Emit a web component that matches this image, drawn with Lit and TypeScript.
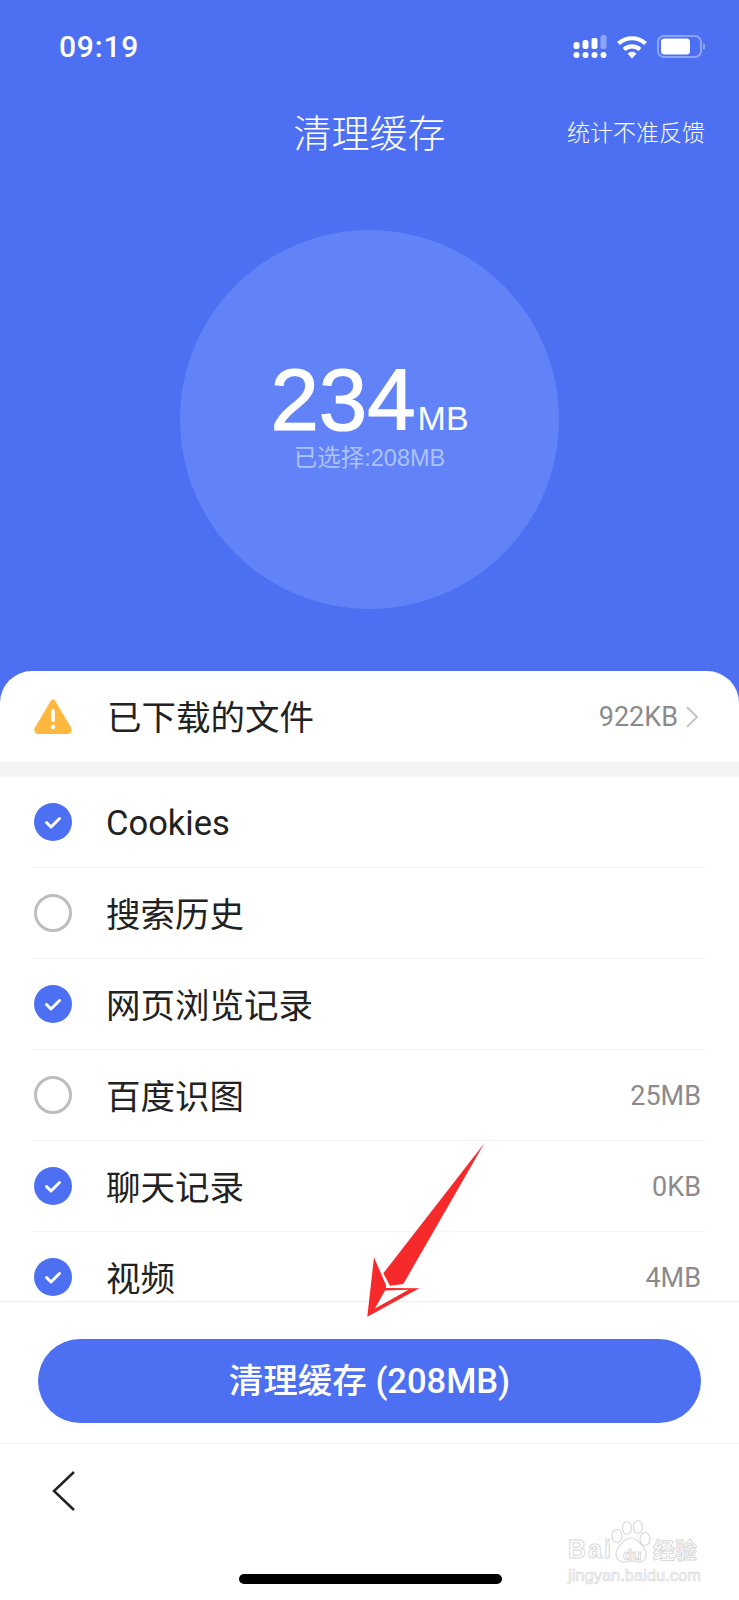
import { LitElement, html, css, svg } from 'lit';
import { customElement } from 'lit/decorators.js';

const ROWS = [
  { name: 'Cookies', size: '', on: true, latin: true },
  { name: '搜索历史', size: '', on: false },
  { name: '网页浏览记录', size: '', on: true },
  { name: '百度识图', size: '25MB', on: false },
  { name: '聊天记录', size: '0KB', on: true },
  { name: '视频', size: '4MB', on: true },
];

@customElement('app-root')
export class AppRoot extends LitElement {
  static styles = css`
    :host {
      display: block;
      width: 739px;
      height: 1600px;
      font-family: Roboto, "Noto Sans CJK SC", sans-serif;
      color: #222;
    }
    .page {
      position: relative;
      height: 1600px;
      display: flex;
      flex-direction: column;
      background: #4d70f2;
      overflow: hidden;
    }
    .status {
      height: 94px;
      display: flex;
      align-items: center;
      justify-content: space-between;
      padding: 0 34px 0 59px;
      color: #fff;
      font-size: 30px;
      font-weight: 500;
      letter-spacing: 0.8px;
    }
    .status span { padding-bottom: 2px; }
    .status svg { display: block; }
    .nav {
      height: 74px;
      display: grid;
      grid-template-columns: 1fr auto 1fr;
      align-items: center;
      padding: 0 34px;
      color: #fff;
    }
    .title { font-size: 38px; font-weight: 300; grid-column: 2; padding-bottom: 2px; }
    .feedback { font-size: 23px; font-weight: 300; justify-self: end; }
    .hero {
      height: 503px;
      padding-top: 62px;
      box-sizing: border-box;
      display: flex;
      justify-content: center;
    }
    .circle {
      width: 379px;
      height: 379px;
      border-radius: 50%;
      background: #6283f8;
      display: flex;
      flex-direction: column;
      align-items: center;
      padding-top: 134px;
      box-sizing: border-box;
      color: #fff;
      font-family: "Liberation Sans", "Noto Sans CJK SC", sans-serif;
    }
    .amount { line-height: 72px; white-space: nowrap; font-size: 87px; }
    .amount b { font-weight: 400; -webkit-text-stroke: 1.2px #fff; }
    .amount span { font-size: 34px; margin-left: 2px; }
    .picked { font-size: 23.5px; line-height: 26px; color: #adc2fb; margin-top: -9px; }
    .sheet {
      flex: 1;
      background: #fff;
      border-radius: 32px 32px 0 0;
      display: flex;
      flex-direction: column;
    }
    .files {
      height: 91px;
      flex: none;
      display: flex;
      align-items: center;
      padding: 0 41px 0 33px;
    }
    .files .name { margin-left: 34px; padding-bottom: 3px; }
    .name { font-size: 34.5px; flex: 1; margin-left: -1px; padding-bottom: 2px; }
    .row .name.latin { padding-bottom: 0; padding-top: 2px; }
    .size { font-size: 27px; color: #8b8b8b; }
    .row .size { padding-top: 2px; }
    .files svg.chev { margin-left: 8px; }
    .band { height: 15px; flex: none; background: #f4f4f4; }
    .list { height: 524px; flex: none; overflow: hidden; }
    .row {
      height: 91px;
      box-sizing: border-box;
      margin: 0 33px 0 32px;
      padding: 0 5px 0 2px;
      display: flex;
      align-items: center;
      gap: 35px;
      border-bottom: 1px solid #f3f3f3;
    }
    .row svg { flex: none; }
    .action {
      flex: none;
      height: 143px;
      box-sizing: border-box;
      padding: 37px 38px 0;
      border-top: 1px solid #efefef;
      border-bottom: 1px solid #f3f3f3;
    }
    .clean {
      height: 84px;
      box-sizing: border-box;
      padding-bottom: 6px;
      border-radius: 42px;
      background: #4d70f2;
      color: #fff;
      display: flex;
      align-items: center;
      justify-content: center;
      font-size: 34.5px;
      font-weight: 500;
    }
    .bottom {
      flex: 1;
      position: relative;
      padding: 27px 0 0 52px;
    }
    .bottom svg { display: block; }
    .home {
      position: absolute;
      left: 239px;
      top: 130px;
      width: 263px;
      height: 10px;
      border-radius: 5px;
      background: #000;
    }
    .arrow {
      position: absolute;
      left: 360px;
      top: 1140px;
    }
    .mark {
      position: absolute;
      left: 560px;
      top: 1516px;
      width: 150px;
      height: 72px;
      color: #fff;
      font-family: "Liberation Sans", "Noto Sans CJK SC", sans-serif;
    }
    .mark span {
      position: absolute;
      -webkit-text-stroke: 1px #d9d9d9;
      white-space: nowrap;
    }
    .mark .bai { left: 8px; top: 21px; font-size: 25px; line-height: 25px; font-weight: 700; letter-spacing: 2px; }
    .mark .du { left: 63px; top: 31px; font-size: 15px; line-height: 15px; font-weight: 700; }
    .mark .cn { left: 93px; top: 24px; font-size: 22px; line-height: 22px; font-weight: 700; }
    .mark .jing { left: 8px; top: 51px; font-size: 16.5px; line-height: 17px; -webkit-text-stroke-width: 0.7px; }
    .mark svg { position: absolute; left: 50px; top: 2px; }
  `;

  private signal() {
    return html`<svg width="132" height="24" viewBox="0 0 132 24">
      <g fill="#fff">
        <rect x="0.500" y="7" width="6" height="7" rx="2.500" />
        <rect x="9.500" y="5" width="6" height="9" rx="2.500" />
        <rect x="18.500" y="3" width="6" height="11" rx="2" />
        <rect x="0.500" y="17" width="6" height="6" rx="3" />
        <rect x="9.500" y="17" width="6" height="6" rx="3" />
        <rect x="18.500" y="17" width="6" height="6" rx="3" />
        <rect x="27.500" y="17" width="6" height="6" rx="3" />
      </g>
      <rect x="27.500" y="0" width="6" height="14" rx="2" fill="#8da5f8" />
      <g fill="none" stroke="#fff" stroke-width="4.200">
        <path d="M45.500 8.500 a20 20 0 0 1 27 0" />
        <path d="M51 14.500 a12 12 0 0 1 16 0" />
      </g>
      <path d="M54.500 18.500 a7 7 0 0 1 9 0 L59 23.500z" fill="#fff" />
      <rect x="85" y="1" width="43" height="21" rx="6" fill="none" stroke="#8da5f8" stroke-width="2" />
      <rect x="88" y="3.500" width="29" height="16" rx="3.500" fill="#fff" />
      <path d="M130 8.500 a3 3 0 0 1 0 6z" fill="#8da5f8" />
    </svg>`;
  }

  private check(on: boolean) {
    if (!on) {
      return html`<svg width="38" height="38" viewBox="0 0 38 38">
        <circle cx="19" cy="19" r="17.500" fill="none" stroke="#bdbdbd" stroke-width="3" />
      </svg>`;
    }
    return html`<svg width="38" height="38" viewBox="0 0 38 38">
      <circle cx="19" cy="19" r="19" fill="#4d70f2" />
      <path d="M12.500 19.500 L17 24 L25.500 15.500" fill="none" stroke="#fff" stroke-width="3" stroke-linecap="round" stroke-linejoin="round" />
    </svg>`;
  }

  private arrow() {
    return svg`<svg class="arrow" width="130" height="185" viewBox="360 1140 130 185">
      <path d="M484.300 1143.300 L383.300 1273.300 L390 1285.700 L403.300 1284z" fill="#f62a2a" />
      <path d="M374 1257.300 L367.300 1316.700 L419.300 1288.300 L386 1288 L386 1285z" fill="#f62a2a" />
      <path d="M375 1308.500 L385 1290.500 L408.500 1289.800z" fill="#fff" />
    </svg>`;
  }

  render() {
    return html`
      <div class="page">
        <div class="status">
          <span>09:19</span>
          ${this.signal()}
        </div>
        <div class="nav">
          <div class="title">清理缓存</div>
          <div class="feedback">统计不准反馈</div>
        </div>
        <div class="hero">
          <div class="circle">
            <div class="amount"><b>234</b><span>MB</span></div>
            <div class="picked">已选择:208MB</div>
          </div>
        </div>
        <div class="sheet">
          <div class="files">
            <svg width="40" height="37" viewBox="0 0 40 37">
              <path d="M20 4 L36 31 Q37 33.500 34 33.500 L6 33.500 Q3 33.500 4 31z" fill="#feb83e" stroke="#feb83e" stroke-width="5" stroke-linejoin="round" />
              <rect x="18.300" y="11" width="3.500" height="13" rx="1.500" fill="#fff" />
              <circle cx="20" cy="29" r="2.200" fill="#fff" />
            </svg>
            <div class="name">已下载的文件</div>
            <div class="size">922KB</div>
            <svg class="chev" width="12" height="22" viewBox="0 0 12 22">
              <path d="M1 1 L11 11 L1 21" fill="none" stroke="#c6c6c6" stroke-width="2" />
            </svg>
          </div>
          <div class="band"></div>
          <div class="list">
            ${ROWS.map(
              (r) => html`<div class="row">
                ${this.check(r.on)}
                <div class="name ${r.latin ? 'latin' : ''}">${r.name}</div>
                <div class="size">${r.size}</div>
              </div>`
            )}
          </div>
          <div class="action">
            <div class="clean">清理缓存 (208MB)</div>
          </div>
          <div class="bottom">
            <svg width="24" height="40" viewBox="0 0 24 40">
              <path d="M22 1 L2 20 L22 39" fill="none" stroke="#222" stroke-width="2.500" />
            </svg>
            <div class="home"></div>
          </div>
        </div>
        ${this.arrow()}
        <div class="mark">
          <svg width="42" height="47" viewBox="0 0 42 47">
            <g fill="#fff" stroke="#d9d9d9" stroke-width="1.200">
              <ellipse cx="7" cy="18" rx="5" ry="6.500" />
              <ellipse cx="17" cy="10" rx="4.500" ry="6.500" />
              <ellipse cx="28" cy="9" rx="4.500" ry="6.500" />
              <ellipse cx="35" cy="21" rx="5" ry="6.500" />
              <path d="M21 20 C27 20 30 25 34 30 C39 37 35 45 28 44 C24 43 19 43 15 44 C8 45 3 37 8 30 C12 25 15 20 21 20z" />
            </g>
          </svg>
          <span class="bai">Bai</span>
          <span class="du">du</span>
          <span class="cn">经验</span>
          <span class="jing">jingyan.baidu.com</span>
        </div>
      </div>
    `;
  }
}
